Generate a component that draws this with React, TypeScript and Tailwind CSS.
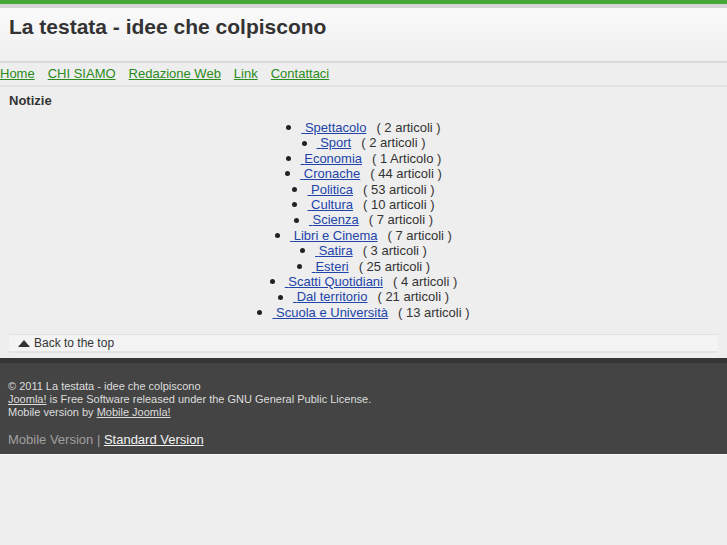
import React from "react";

const categories = [
  { name: "Spettacolo", count: "( 2 articoli )" },
  { name: "Sport", count: "( 2 articoli )" },
  { name: "Economia", count: "( 1 Articolo )" },
  { name: "Cronache", count: "( 44 articoli )" },
  { name: "Politica", count: "( 53 articoli )" },
  { name: "Cultura", count: "( 10 articoli )" },
  { name: "Scienza", count: "( 7 articoli )" },
  { name: "Libri e Cinema", count: "( 7 articoli )" },
  { name: "Satira", count: "( 3 articoli )" },
  { name: "Esteri", count: "( 25 articoli )" },
  { name: "Scatti Quotidiani", count: "( 4 articoli )" },
  { name: "Dal territorio", count: "( 21 articoli )" },
  { name: "Scuola e Università", count: "( 13 articoli )" },
];

const menu = ["Home", "CHI SIAMO", "Redazione Web", "Link", "Contattaci"];

const App = () => {
  return (
    <div className="min-h-[545px] bg-[#eeeeee] font-['Liberation_Sans',Arial,sans-serif] text-[#333]">
      <div className="h-[4px] bg-[#47a736]" />
      <div className="h-[4px] bg-[#d6d6d6]" />
      <header className="h-[55px] bg-gradient-to-b from-[#fafafa] to-[#efefef] border-b-2 border-[#d9d9d9] px-[9px] pt-[6px]">
        <h1 className="text-[21px] font-bold text-[#333] leading-[25px]">
          La testata - idee che colpiscono
        </h1>
      </header>
      <nav className="h-[24px] flex items-center gap-[13px] border-b-2 border-[#e2e2e2] text-[13px]">
        {menu.map((item) => (
          <a key={item} href="#" className="text-[#2b8a20] underline">
            {item}
          </a>
        ))}
      </nav>
      <main className="px-[9px] pt-[6px]">
        <h2 className="text-[13px] font-bold leading-[16px]">Notizie</h2>
        <ul className="mt-[11px] flex flex-col items-center text-[13px] leading-[15.4px]">
          {categories.map((cat) => (
            <li key={cat.name} className="flex items-center">
              <span className="mr-[10px] inline-block w-[5px] h-[5px] rounded-full bg-[#222]" />
              <a href="#" className="text-[#2244aa] underline">
                &nbsp;{cat.name}
              </a>
              <span className="ml-[10px]">{cat.count}</span>
            </li>
          ))}
        </ul>
        <div className="mt-[14px] h-[19px] flex items-center bg-[#f3f3f4] border-t border-b-2 border-[#e3e3e3] pl-[9px] text-[12px] text-[#333]">
          <svg width="12" height="7" viewBox="0 0 12 7" className="mr-[4px]">
            <path d="M0 7 L6 0 L12 7 Z" fill="#333" />
          </svg>
          Back to the top
        </div>
      </main>
      <footer className="mt-[5px] bg-[#444444] border-t-[5px] border-[#353535] px-[8px] pt-[17px] pb-[4px] text-[11px] leading-[13px] text-[#dddddd]">
        <p>© 2011 La testata - idee che colpiscono</p>
        <p>
          <a href="#" className="underline">Joomla!</a> is Free Software released under the GNU General Public License.
        </p>
        <p>
          Mobile version by <a href="#" className="underline">Mobile Joomla!</a>
        </p>
        <p className="mt-[11px] text-[13px] leading-[20px] text-[#a0a0a0]">
          Mobile Version |{" "}
          <a href="#" className="text-[#f2f2f2] underline">Standard Version</a>
        </p>
      </footer>
      <div className="h-[1px] bg-[#f7f7f7]" />
    </div>
  );
};

export default App;
